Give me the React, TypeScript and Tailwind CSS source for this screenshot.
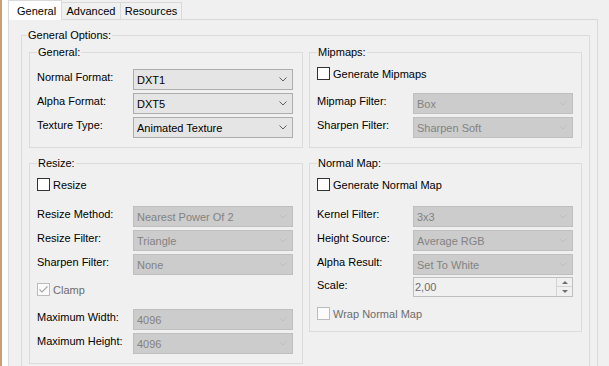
import React from 'react';
import clsx from 'clsx';

type Kids = { children?: React.ReactNode };

function Chevron({ disabled }: { disabled?: boolean }) {
  return (
    <svg width="8" height="5" viewBox="0 0 8 5" className="shrink-0">
      <path d="M0.5 0.5L4 4L7.5 0.5" fill="none" stroke={disabled ? '#bfbfbf' : '#606060'} strokeWidth="1" />
    </svg>
  );
}

function Combo({ value, disabled }: { value: string; disabled?: boolean }) {
  return (
    <div
      className={clsx(
        'flex h-[21px] w-[160px] shrink-0 items-center justify-between border pl-[3px] pr-[5px]',
        disabled ? 'border-[#bfbfbf] bg-[#cccccc] text-[#838383]' : 'border-[#adadad] bg-[#e5e5e5] text-black'
      )}
    >
      <span className="pt-px leading-[14px]">{value}</span>
      <Chevron disabled={disabled} />
    </div>
  );
}

function Spinner({ value }: { value: string }) {
  return (
    <div className="flex h-[20px] w-[160px] shrink-0 border border-[#bfbfbf] bg-[#f0f0f0]">
      <span className="flex-1 pl-px pt-[2px] leading-[14px] text-[#6d6d6d]">{value}</span>
      <div className="flex w-[16px] flex-col border-l border-[#d4d4d4]">
        <div className="flex h-[9px] items-center justify-center border-b border-[#d4d4d4]">
          <svg width="6" height="3" viewBox="0 0 6 3">
            <path d="M0 3L3 0L6 3Z" fill="#707070" />
          </svg>
        </div>
        <div className="flex flex-1 items-center justify-center">
          <svg width="6" height="3" viewBox="0 0 6 3">
            <path d="M0 0L3 3L6 0Z" fill="#707070" />
          </svg>
        </div>
      </div>
    </div>
  );
}

function Field({ label, children }: { label: string } & Kids) {
  return (
    <div className="flex items-start">
      <span className="w-[96px] shrink-0 pt-px leading-[14px]">{label}</span>
      {children}
    </div>
  );
}

function Check({ label, checked, disabled }: { label: string; checked?: boolean; disabled?: boolean }) {
  return (
    <div className="flex h-[13px] items-center gap-[3px]">
      <div
        className={clsx(
          'flex h-[13px] w-[13px] shrink-0 items-center justify-center border',
          disabled ? 'border-[#bcbcbc] bg-[#fbfbfb]' : 'border-[#333333] bg-white'
        )}
      >
        {checked && (
          <svg width="11" height="11" viewBox="0 0 11 11">
            <path d="M1.5 5.5L4 8L9.5 2.5" fill="none" stroke="#a8a8a8" strokeWidth="1.2" />
          </svg>
        )}
      </div>
      <span className={clsx('leading-[14px]', disabled ? 'text-[#6d6d6d]' : 'text-black')}>{label}</span>
    </div>
  );
}

function Group({ title, outer, children }: { title: string; outer?: boolean } & Kids) {
  return (
    <fieldset className="min-w-0 border border-[#dcdcdc]">
      <legend className={clsx('px-px leading-[14px]', outer ? 'ml-[5px]' : 'ml-[7px]')}>{title}</legend>
      {children}
    </fieldset>
  );
}

export default function App() {
  return (
    <div className="flex h-[366px] w-[609px] overflow-hidden bg-[#f0f0f0] font-['Segoe_UI','Liberation_Sans',Arial,sans-serif] text-[11px] text-black">
      <div className="w-[2px] shrink-0 bg-[#c8a07c]" />
      <div className="w-[6px] shrink-0 bg-white" />

      <div className="flex w-[590px] shrink-0 flex-col">
        {/* tab strip */}
        <div className="flex h-[20px] items-start">
          <div className="h-[20px] w-[54px] border-x border-t border-[#d9d9d9] bg-white pl-[8px] pt-[3px] leading-[14px]">
            General
          </div>
          <div className="mt-[2px] h-[18px] w-[59px] border-y border-r border-[#d9d9d9] pt-px text-center leading-[14px]">
            Advanced
          </div>
          <div className="mt-[2px] h-[18px] w-[61px] border-y border-r border-[#d9d9d9] pt-px text-center leading-[14px]">
            Resources
          </div>
          <div className="h-[20px] flex-1 border-b border-[#d9d9d9]" />
        </div>

        {/* tab page */}
        <div className="flex-1 border-x border-[#d9d9d9] bg-[#f0f0f0] pl-[12px] pr-[7px] pt-[8px]">
          <Group title="General Options:" outer>
            <div className="grid grid-cols-[274px_273px] items-start gap-x-[6px] gap-y-[8px] px-[7px] pb-[40px] pt-[3px]">
              <Group title="General:">
                <div className="flex flex-col gap-[3px] pb-[9px] pl-[7px] pt-[10px]">
                  <Field label="Normal Format:">
                    <Combo value="DXT1" />
                  </Field>
                  <Field label="Alpha Format:">
                    <Combo value="DXT5" />
                  </Field>
                  <Field label="Texture Type:">
                    <Combo value="Animated Texture" />
                  </Field>
                </div>
              </Group>

              <Group title="Mipmaps:">
                <div className="flex flex-col pb-[9px] pl-[7px] pt-[8px]">
                  <Check label="Generate Mipmaps" />
                  <div className="mt-[13px] flex flex-col gap-[3px]">
                    <Field label="Mipmap Filter:">
                      <Combo value="Box" disabled />
                    </Field>
                    <Field label="Sharpen Filter:">
                      <Combo value="Sharpen Soft" disabled />
                    </Field>
                  </div>
                </div>
              </Group>

              <Group title="Resize:">
                <div className="flex flex-col pb-[9px] pl-[7px] pt-[8px]">
                  <Check label="Resize" />
                  <div className="mt-[15px] flex flex-col gap-[3px]">
                    <Field label="Resize Method:">
                      <Combo value="Nearest Power Of 2" disabled />
                    </Field>
                    <Field label="Resize Filter:">
                      <Combo value="Triangle" disabled />
                    </Field>
                    <Field label="Sharpen Filter:">
                      <Combo value="None" disabled />
                    </Field>
                  </div>
                  <div className="mt-[8px]">
                    <Check label="Clamp" checked disabled />
                  </div>
                  <div className="mt-[13px] flex flex-col gap-[3px]">
                    <Field label="Maximum Width:">
                      <Combo value="4096" disabled />
                    </Field>
                    <Field label="Maximum Height:">
                      <Combo value="4096" disabled />
                    </Field>
                  </div>
                </div>
              </Group>

              <Group title="Normal Map:">
                <div className="flex flex-col pb-[11px] pl-[7px] pt-[8px]">
                  <Check label="Generate Normal Map" />
                  <div className="mt-[15px] flex flex-col gap-[3px]">
                    <Field label="Kernel Filter:">
                      <Combo value="3x3" disabled />
                    </Field>
                    <Field label="Height Source:">
                      <Combo value="Average RGB" disabled />
                    </Field>
                    <Field label="Alpha Result:">
                      <Combo value="Set To White" disabled />
                    </Field>
                  </div>
                  <div className="mt-[2px]">
                    <Field label="Scale:">
                      <Spinner value="2,00" />
                    </Field>
                  </div>
                  <div className="mt-[10px]">
                    <Check label="Wrap Normal Map" disabled />
                  </div>
                </div>
              </Group>
            </div>
          </Group>
        </div>
      </div>

      <div className="flex-1" />
    </div>
  );
}
